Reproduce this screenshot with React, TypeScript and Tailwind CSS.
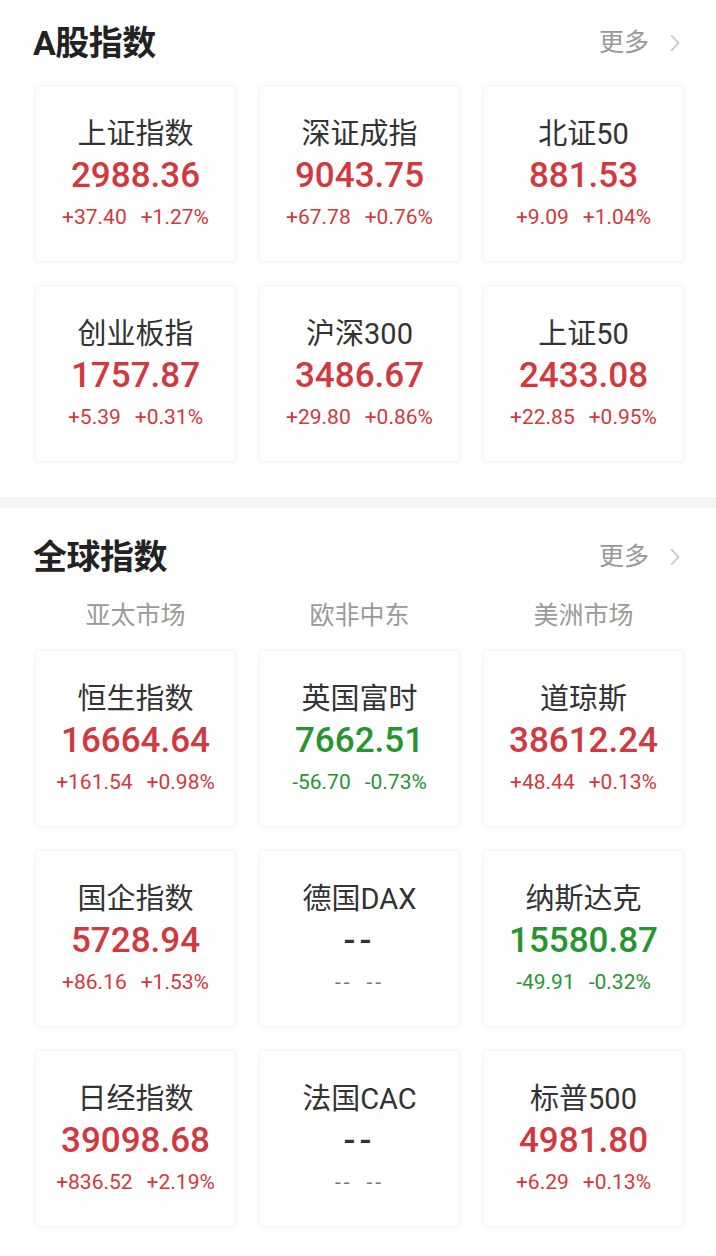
import React from 'react';

type Quote = {
  name: string;
  price: string;
  change: string;
  pct: string;
  trend: 'up' | 'down' | 'none';
};

const aShares: Quote[] = [
  { name: '上证指数', price: '2988.36', change: '+37.40', pct: '+1.27%', trend: 'up' },
  { name: '深证成指', price: '9043.75', change: '+67.78', pct: '+0.76%', trend: 'up' },
  { name: '北证50', price: '881.53', change: '+9.09', pct: '+1.04%', trend: 'up' },
  { name: '创业板指', price: '1757.87', change: '+5.39', pct: '+0.31%', trend: 'up' },
  { name: '沪深300', price: '3486.67', change: '+29.80', pct: '+0.86%', trend: 'up' },
  { name: '上证50', price: '2433.08', change: '+22.85', pct: '+0.95%', trend: 'up' },
];

const globals: Quote[] = [
  { name: '恒生指数', price: '16664.64', change: '+161.54', pct: '+0.98%', trend: 'up' },
  { name: '英国富时', price: '7662.51', change: '-56.70', pct: '-0.73%', trend: 'down' },
  { name: '道琼斯', price: '38612.24', change: '+48.44', pct: '+0.13%', trend: 'up' },
  { name: '国企指数', price: '5728.94', change: '+86.16', pct: '+1.53%', trend: 'up' },
  { name: '德国DAX', price: '--', change: '--', pct: '--', trend: 'none' },
  { name: '纳斯达克', price: '15580.87', change: '-49.91', pct: '-0.32%', trend: 'down' },
  { name: '日经指数', price: '39098.68', change: '+836.52', pct: '+2.19%', trend: 'up' },
  { name: '法国CAC', price: '--', change: '--', pct: '--', trend: 'none' },
  { name: '标普500', price: '4981.80', change: '+6.29', pct: '+0.13%', trend: 'up' },
];

const font = { fontFamily: 'Roboto, "Noto Sans CJK SC", sans-serif' };

const colorOf = (t: Quote['trend']) =>
  t === 'up' ? 'text-[#d2383d]' : t === 'down' ? 'text-[#25962f]' : 'text-[#333333]';

const Card: React.FC<{ q: Quote }> = ({ q }) => (
  <div className="h-[177px] flex flex-col items-center justify-center bg-white border border-[#f5f5f5] rounded-[4px] shadow-[0_1px_6px_rgba(0,0,0,0.035)]">
    <div className="text-[29px] leading-[40px] mt-[2px] text-[#333333]">{q.name}</div>
    <div
      className={`text-[35px] leading-[44px] font-medium ${colorOf(q.trend)} ${q.trend === 'none' ? 'tracking-[4px] font-bold' : ''}`}
    >
      {q.price}
    </div>
    <div
      className={`flex gap-[14px] text-[21px] leading-[38px] ${q.trend === 'none' ? 'text-[#777777] tracking-[3px]' : colorOf(q.trend)}`}
    >
      <span>{q.change}</span>
      <span>{q.pct}</span>
    </div>
  </div>
);

const Header: React.FC<{ title: string }> = ({ title }) => (
  <div className="h-10 pl-[33px] pr-[36px] flex items-center justify-between">
    <h2 className="text-[34px] font-bold text-[#222222] tracking-[-0.5px]">{title}</h2>
    <div className="flex items-center gap-[21px] text-[25px] text-[#999999]">
      <span>更多</span>
      <svg width="10" height="18" viewBox="0 0 10 18" fill="none">
        <path d="M1.5 1.5L8.5 9L1.5 16.5" stroke="#c4c4c4" strokeWidth="1.6" strokeLinecap="round" strokeLinejoin="round" />
      </svg>
    </div>
  </div>
);

export default function App() {
  return (
    <div className="w-[716px] h-[1256px] bg-white overflow-hidden" style={font}>
      <section className="pt-[23px] pb-[35px]">
        <Header title="A股指数" />
        <div className="mt-[22px] pl-[35px] pr-[32px] grid grid-cols-3 gap-[23px]">
          {aShares.map(q => (
            <Card key={q.name} q={q} />
          ))}
        </div>
      </section>

      <div className="h-[11px] bg-[#f4f4f4]" />

      <section className="pt-[29px]">
        <Header title="全球指数" />
        <div className="mt-5 pl-[35px] pr-[32px] grid grid-cols-3 gap-x-[23px] h-8 items-center text-[25px] text-[#9a9a9a] text-center">
          <span>亚太市场</span>
          <span>欧非中东</span>
          <span>美洲市场</span>
        </div>
        <div className="mt-[21px] pl-[35px] pr-[32px] grid grid-cols-3 gap-[23px]">
          {globals.map(q => (
            <Card key={q.name} q={q} />
          ))}
        </div>
      </section>
    </div>
  );
}
